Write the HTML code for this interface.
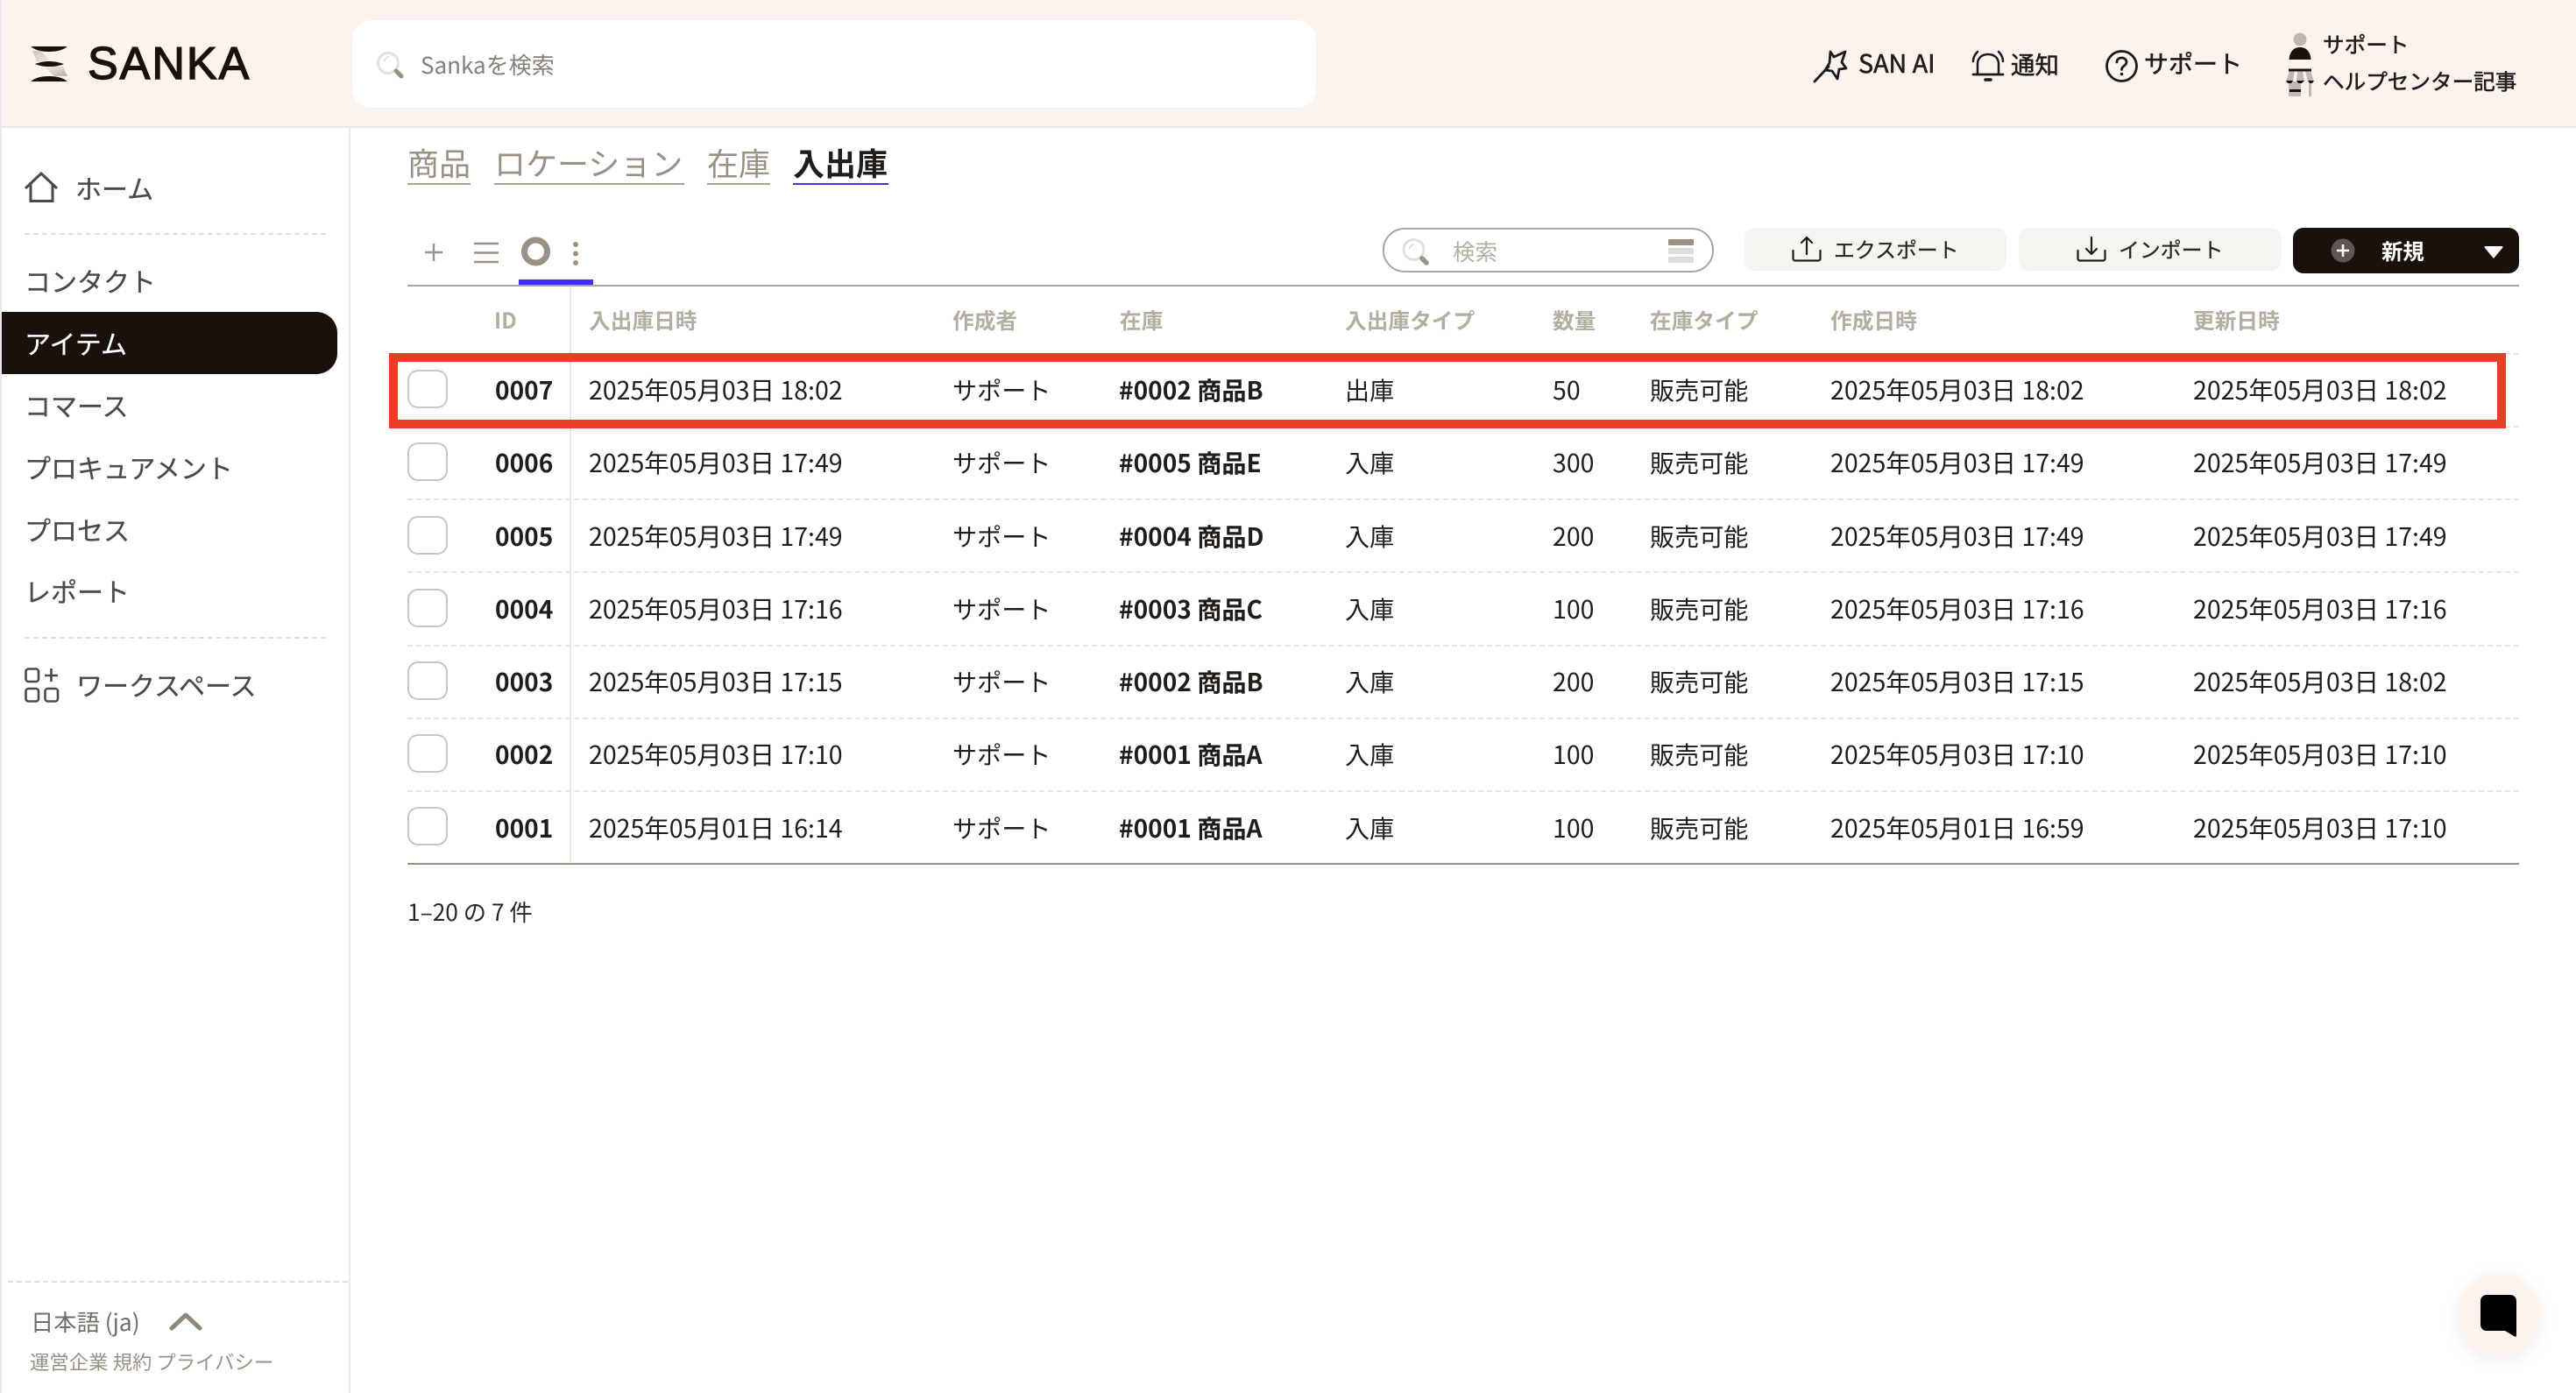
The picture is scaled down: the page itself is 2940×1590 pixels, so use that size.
<!DOCTYPE html>
<html lang="ja"><head><meta charset="utf-8"><title>Sanka</title>
<style>
html,body{margin:0;padding:0;background:#fff}
body{width:2940px;height:1590px;position:relative;overflow:hidden;font-family:"Noto Sans CJK JP","Liberation Sans",sans-serif;color:#1f1c1a}
.a{position:absolute}
.t{position:absolute;white-space:nowrap;line-height:40px;height:40px}
svg{position:absolute;overflow:visible}
.side{font-size:30px;color:#4a4a4a;-webkit-text-stroke:.3px #4a4a4a}
.h{font-size:24.700px;color:#b3ae9f;font-weight:700;top:345px}
.row{position:absolute;left:0;width:2940px;height:83px}
.row span{position:absolute;top:20.500px;white-space:nowrap;line-height:40px;font-size:28.500px;color:#1f1c1a}
.row span:nth-of-type(2),.row span:nth-of-type(3),.row span:nth-of-type(5){font-size:28.100px}
.row b{position:absolute;top:20.500px;white-space:nowrap;line-height:40px;font-size:28.100px;color:#1f1c1a;font-weight:700}
.cb{position:absolute;left:465px;top:18px;width:42px;height:40px;border:2px solid #c6c6c4;border-radius:12px;background:#fff}
.dash{position:absolute;left:465px;width:2410px;height:0;border-top:2px dashed #e6e6e6}
.sd{position:absolute;height:0;border-top:2px dashed #dfdfdf}
.tab{font-size:36px;color:#9a9184;top:165px}
.ul{position:absolute;top:209px;height:2px;background:#a8a296}
.m{-webkit-text-stroke:.55px #1f1c1a}
</style></head><body>

<!-- header -->
<div class="a" style="left:0;top:0;width:2940px;height:144px;background:#fdf3ee"></div>
<div class="a" style="left:0;top:144px;width:2940px;height:2px;background:#e9e9e9"></div>
<div class="a" style="left:0;top:0;width:2px;height:1590px;background:#e9e9e9"></div>
<div class="a" style="left:398px;top:146px;width:2px;height:1444px;background:#e9e9e9"></div>

<svg style="left:0;top:0" width="100" height="110" viewBox="0 0 100 110">
<defs>
<linearGradient id="g1" x1="0" y1="0" x2="1" y2="1"><stop offset="0" stop-color="#c9c5c1"/><stop offset="1" stop-color="#f6f0eb"/></linearGradient>
<linearGradient id="g2" x1="0" y1="0" x2="1" y2="1"><stop offset="0" stop-color="#f6f0eb"/><stop offset="1" stop-color="#b5b1ad"/></linearGradient>
</defs>
<path d="M37 58L42 71H60L46 58Z" fill="url(#g1)"/>
<path d="M50 76L62 87H77L72 76Z" fill="url(#g2)"/>
<path d="M35 53H77C72 57 66 59 56 59C46 59 40 57 35 53Z" fill="#1a110c"/>
<path d="M40 73C46 71 50 70 56 70C62 70 67 71 73 73C67 75.500 62 76 56 76C50 76 46 75.500 40 73Z" fill="#1a110c"/>
<path d="M35 93H77C72 89 66 87 56 87C46 87 40 89 35 93Z" fill="#1a110c"/>
</svg>
<div class="t" style="left:100px;top:43px;font:400 52px/60px 'Liberation Sans',sans-serif;height:60px;letter-spacing:2px;color:#1a110c;-webkit-text-stroke:1.400px #1a110c">SANKA</div>

<div class="a" style="left:402px;top:23px;width:1100px;height:100px;background:#fff;border-radius:22px"></div>
<svg style="left:430px;top:58px" width="32" height="32" viewBox="0 0 32 32">
<circle cx="13" cy="14" r="11.500" fill="#fff" stroke="#e2e0dc" stroke-width="3"/>
<path d="M9 12a5 5 0 0 1 5-5" fill="none" stroke="#e2e0dc" stroke-width="2"/>
<path d="M22 23l6 6" stroke="#9a9184" stroke-width="5" stroke-linecap="round"/></svg>
<div class="t" style="left:480px;top:54px;font-size:26px;color:#85807a">Sankaを検索</div>

<!-- top right -->
<svg style="left:2070px;top:57px" width="38" height="38" viewBox="0 0 38 38" fill="none" stroke="#1a1a1a" stroke-width="2.800" stroke-linejoin="round" stroke-linecap="round">
<path d="M1 36L17 19"/>
<path d="M19 2L23 8L36 2L32 14L37 21L29 22L27 33L21 24L13 23L18 15Z"/></svg>
<div class="t m" style="left:2121px;top:52px;font-size:28.700px;color:#1f1c1a">SAN AI</div>

<svg style="left:2249px;top:57px" width="40" height="38" viewBox="0 0 40 38" fill="none" stroke="#1a1a1a" stroke-width="2.500" stroke-linecap="round">
<path d="M8 27V16C8 9 13 5 20 5C27 5 32 9 32 16V27"/>
<path d="M3 28H37" stroke-width="2.800"/>
<path d="M3 13C3 8 5 5 8 2M37 13C37 8 35 5 32 2"/>
<path d="M17 34H23" stroke-width="3.600"/></svg>
<div class="t m" style="left:2295px;top:52px;font-size:27.500px">通知</div>

<svg style="left:2403px;top:57px" width="37" height="37" viewBox="0 0 37 37" fill="none" stroke="#1a1a1a" stroke-width="2.800" stroke-linecap="round">
<circle cx="18.500" cy="18.500" r="17"/>
<path d="M13 14C13 10.500 15.500 9 18.500 9C21.500 9 24 11 24 14C24 18 18.500 18 18.500 22.500"/>
<circle cx="18.500" cy="27.500" r="1.800" fill="#1a1a1a" stroke="none"/></svg>
<div class="t m" style="left:2447px;top:52px;font-size:28px">サポート</div>

<svg style="left:2590px;top:30px" width="70" height="90" viewBox="0 0 70 90">
<circle cx="35" cy="15" r="7.500" fill="#bfb8b5"/>
<path d="M22.500 38C23 29 28 24 35 24C42 24 47 29 47.500 38Z" fill="#1a110c"/>
<path d="M23 51H29L27 63H19ZM32 51H38L40 63H31ZM41 51H47L51 63H44Z" fill="#bfb8b5"/>
<path d="M22 63H36V80H22ZM45 63H48V80H45Z" fill="#bfb8b5"/>
<rect x="22" y="48.500" width="26" height="3" fill="#1a110c"/>
<path d="M19 62H27L25 65H21ZM31 62H40L37 65H33ZM44 62H51L49 65H46Z" fill="#1a110c"/>
<rect x="23" y="72" width="13" height="3" fill="#1a110c"/></svg>
<div class="t m" style="left:2651px;top:30px;font-size:24.600px">サポート</div>
<div class="t m" style="left:2651px;top:72px;font-size:24.600px">ヘルプセンター記事</div>

<!-- sidebar -->
<svg style="left:28px;top:196px" width="40" height="36" viewBox="0 0 40 36" fill="none" stroke="#4a4a4a" stroke-width="3" stroke-linejoin="miter">
<path d="M1 19L19 2L37 19"/><path d="M7 14V33.500H32V14"/></svg>
<div class="t side" style="left:86px;top:194px">ホーム</div>
<div class="sd" style="left:28px;top:266px;width:344px"></div>
<div class="t side" style="left:28px;top:300px">コンタクト</div>
<div class="a" style="left:2px;top:356px;width:383px;height:71px;background:#1a110c;border-radius:0 24px 24px 0"></div>
<div class="t side" style="left:28px;top:371px;color:#fff;-webkit-text-stroke:.3px #fff">アイテム</div>
<div class="t side" style="left:28px;top:442px">コマース</div>
<div class="t side" style="left:28px;top:513px">プロキュアメント</div>
<div class="t side" style="left:28px;top:584px">プロセス</div>
<div class="t side" style="left:28px;top:654px">レポート</div>
<div class="sd" style="left:28px;top:727px;width:344px"></div>
<svg style="left:28px;top:762px" width="40" height="40" viewBox="0 0 40 40" fill="none" stroke="#4a4a4a" stroke-width="2.600">
<rect x="1.500" y="1.500" width="14.500" height="14.500" rx="3"/>
<rect x="1.500" y="24" width="14.500" height="14.500" rx="3"/>
<rect x="23.500" y="24" width="14.500" height="14.500" rx="3"/>
<path d="M30.500 1V16M23 9H38"/></svg>
<div class="t side" style="left:87px;top:761px">ワークスペース</div>

<div class="sd" style="left:9px;top:1462px;width:388px"></div>
<div class="t" style="left:35px;top:1488px;font-size:26.300px;color:#716d66">日本語 (ja)</div>
<svg style="left:191px;top:1495px" width="42" height="26" viewBox="0 0 42 26" fill="none" stroke="#8f8778" stroke-width="5" stroke-linecap="round" stroke-linejoin="round"><path d="M5 21L21 6L37 21"/></svg>
<div class="t" style="left:34px;top:1534px;font-size:22.400px;color:#9a9184">運営企業 規約 プライバシー</div>

<!-- sub tabs -->
<div class="t tab" style="left:465px">商品</div><div class="ul" style="left:465px;width:72px"></div>
<div class="t tab" style="left:564px">ロケーション</div><div class="ul" style="left:564px;width:217px"></div>
<div class="t tab" style="left:807px">在庫</div><div class="ul" style="left:807px;width:72px"></div>
<div class="t tab" style="left:905px;color:#1f1c1a;font-weight:700">入出庫</div><div class="ul" style="left:905px;width:109px;background:#4430e8"></div>

<!-- view switcher -->
<svg style="left:480px;top:265px" width="200" height="62" viewBox="0 0 200 62">
<path d="M15 13V33M5 23H25" stroke="#9a9184" stroke-width="2.400"/>
<path d="M61 13H89M61 23.500H89M61 34H89" stroke="#9a9184" stroke-width="2.600"/>
<circle cx="131.500" cy="22" r="13" fill="none" stroke="#9a9184" stroke-width="7"/>
<circle cx="177" cy="14" r="3" fill="#9a9184"/><circle cx="177" cy="24.500" r="3" fill="#9a9184"/><circle cx="177" cy="35" r="3" fill="#9a9184"/>
</svg>
<div class="a" style="left:592px;top:319px;width:85px;height:6px;background:#4430e8"></div>
<div class="a" style="left:465px;top:325px;width:2410px;height:2px;background:#a5a5a5"></div>

<!-- search 2 -->
<div class="a" style="left:1578px;top:260px;width:374px;height:47px;border:2px solid #a5a5a5;border-radius:25px;background:#fff"></div>
<svg style="left:1600px;top:272px" width="32" height="30" viewBox="0 0 32 30">
<circle cx="13.500" cy="13" r="11.500" fill="#fff" stroke="#e2e0dc" stroke-width="3"/>
<path d="M9 12a5 5 0 0 1 5-5" fill="none" stroke="#e2e0dc" stroke-width="2"/>
<path d="M23 23l5 5" stroke="#9a9184" stroke-width="5.500" stroke-linecap="round"/></svg>
<div class="t" style="left:1658px;top:267px;font-size:25.500px;color:#b3ae9f">検索</div>
<div class="a" style="left:1904px;top:273px;width:29px;height:6.500px;background:#9a9184;border-radius:1px"></div>
<div class="a" style="left:1904px;top:283px;width:29px;height:6.500px;background:#dedcd8;border-radius:1px"></div>
<div class="a" style="left:1904px;top:293px;width:29px;height:6.500px;background:#dedcd8;border-radius:1px"></div>

<!-- buttons -->
<div class="a" style="left:1991px;top:260px;width:299px;height:49px;background:#f5f4f0;border-radius:12px"></div>
<svg style="left:2045px;top:269px" width="34" height="30" viewBox="0 0 34 30" fill="none" stroke="#1f1c1a" stroke-width="2.200" stroke-linecap="round" stroke-linejoin="round">
<path d="M17 21V2M11 8L17 2L23 8"/><path d="M1.500 17V26C1.500 27.500 2.500 28.500 4 28.500H30C31.500 28.500 32.500 27.500 32.500 26V17"/></svg>
<div class="t" style="left:2093px;top:264px;font-size:23.900px;color:#2a2725;-webkit-text-stroke:.25px #2a2725">エクスポート</div>

<div class="a" style="left:2304px;top:260px;width:300px;height:49px;background:#f5f4f0;border-radius:12px"></div>
<svg style="left:2370px;top:269px" width="34" height="30" viewBox="0 0 34 30" fill="none" stroke="#1f1c1a" stroke-width="2.200" stroke-linecap="round" stroke-linejoin="round">
<path d="M17 2V21M11 15L17 21L23 15"/><path d="M1.500 17V26C1.500 27.500 2.500 28.500 4 28.500H30C31.500 28.500 32.500 27.500 32.500 26V17"/></svg>
<div class="t" style="left:2418px;top:264px;font-size:23.900px;color:#2a2725;-webkit-text-stroke:.25px #2a2725">インポート</div>

<div class="a" style="left:2617px;top:260px;width:258px;height:52px;background:#1a110c;border-radius:12px"></div>
<svg style="left:2660px;top:272px" width="28" height="28" viewBox="0 0 28 28"><circle cx="14" cy="14" r="13.500" fill="#5d5654"/><path d="M14 7V21M7 14H21" stroke="#fff" stroke-width="2.600"/></svg>
<div class="t" style="left:2718px;top:267px;font-size:24.400px;font-weight:700;color:#fff">新規</div>
<svg style="left:2834px;top:280px" width="24" height="16" viewBox="0 0 24 16"><path d="M2.500 2H21.500L12 13.500Z" fill="#fff" stroke="#fff" stroke-width="2" stroke-linejoin="round"/></svg>

<!-- table header -->
<div class="t h" style="left:564px">ID</div>
<div class="t h" style="left:672px">入出庫日時</div>
<div class="t h" style="left:1087px">作成者</div>
<div class="t h" style="left:1278px">在庫</div>
<div class="t h" style="left:1535px">入出庫タイプ</div>
<div class="t h" style="left:1772px">数量</div>
<div class="t h" style="left:1883px">在庫タイプ</div>
<div class="t h" style="left:2089px">作成日時</div>
<div class="t h" style="left:2503px">更新日時</div>

<div class="dash" style="top:403px"></div>
<div class="dash" style="top:486px"></div>
<div class="dash" style="top:569px"></div>
<div class="dash" style="top:652px"></div>
<div class="dash" style="top:736px"></div>
<div class="dash" style="top:819px"></div>
<div class="dash" style="top:902px"></div>
<div class="a" style="left:650px;top:327px;width:2px;height:658px;background:#e9e9e9"></div>

<div class="row" style="top:404px"><div class="cb"></div><b style="left:565px">0007</b><span style="left:672px">2025年05月03日 18:02</span><span style="left:1087px">サポート</span><b style="left:1277px">#0002 商品B</b><span style="left:1535px">出庫</span><span style="left:1772px">50</span><span style="left:1883px">販売可能</span><span style="left:2089px">2025年05月03日 18:02</span><span style="left:2503px">2025年05月03日 18:02</span></div>
<div class="row" style="top:487px"><div class="cb"></div><b style="left:565px">0006</b><span style="left:672px">2025年05月03日 17:49</span><span style="left:1087px">サポート</span><b style="left:1277px">#0005 商品E</b><span style="left:1535px">入庫</span><span style="left:1772px">300</span><span style="left:1883px">販売可能</span><span style="left:2089px">2025年05月03日 17:49</span><span style="left:2503px">2025年05月03日 17:49</span></div>
<div class="row" style="top:571px"><div class="cb"></div><b style="left:565px">0005</b><span style="left:672px">2025年05月03日 17:49</span><span style="left:1087px">サポート</span><b style="left:1277px">#0004 商品D</b><span style="left:1535px">入庫</span><span style="left:1772px">200</span><span style="left:1883px">販売可能</span><span style="left:2089px">2025年05月03日 17:49</span><span style="left:2503px">2025年05月03日 17:49</span></div>
<div class="row" style="top:654px"><div class="cb"></div><b style="left:565px">0004</b><span style="left:672px">2025年05月03日 17:16</span><span style="left:1087px">サポート</span><b style="left:1277px">#0003 商品C</b><span style="left:1535px">入庫</span><span style="left:1772px">100</span><span style="left:1883px">販売可能</span><span style="left:2089px">2025年05月03日 17:16</span><span style="left:2503px">2025年05月03日 17:16</span></div>
<div class="row" style="top:737px"><div class="cb"></div><b style="left:565px">0003</b><span style="left:672px">2025年05月03日 17:15</span><span style="left:1087px">サポート</span><b style="left:1277px">#0002 商品B</b><span style="left:1535px">入庫</span><span style="left:1772px">200</span><span style="left:1883px">販売可能</span><span style="left:2089px">2025年05月03日 17:15</span><span style="left:2503px">2025年05月03日 18:02</span></div>
<div class="row" style="top:820px"><div class="cb"></div><b style="left:565px">0002</b><span style="left:672px">2025年05月03日 17:10</span><span style="left:1087px">サポート</span><b style="left:1277px">#0001 商品A</b><span style="left:1535px">入庫</span><span style="left:1772px">100</span><span style="left:1883px">販売可能</span><span style="left:2089px">2025年05月03日 17:10</span><span style="left:2503px">2025年05月03日 17:10</span></div>
<div class="row" style="top:904px"><div class="cb" style="top:17px"></div><b style="left:565px">0001</b><span style="left:672px">2025年05月01日 16:14</span><span style="left:1087px">サポート</span><b style="left:1277px">#0001 商品A</b><span style="left:1535px">入庫</span><span style="left:1772px">100</span><span style="left:1883px">販売可能</span><span style="left:2089px">2025年05月01日 16:59</span><span style="left:2503px">2025年05月03日 17:10</span></div>

<div class="a" style="left:465px;top:985px;width:2410px;height:2px;background:#9a9184"></div>
<div class="t" style="left:465px;top:1020px;font-size:26.300px;color:#2a2725;font-weight:400">1–20 の 7 件</div>

<!-- red highlight -->
<div class="a" style="left:444px;top:403px;width:2396px;height:66px;border:10px solid #e93e25"></div>

<!-- chat -->
<div class="a" style="left:2804px;top:1454px;width:96px;height:96px;border-radius:50%;background:#fdf3ee;box-shadow:0 3px 20px rgba(0,0,0,.08)"></div>
<svg style="left:2831px;top:1478px" width="41" height="48" viewBox="0 0 41 48"><path d="M7 0H34C38 0 41 3 41 7V46C41 47.500 40 48 39 47.500L28 41H7C3 41 0 38 0 34V7C0 3 3 0 7 0Z" fill="#000"/></svg>

</body></html>
